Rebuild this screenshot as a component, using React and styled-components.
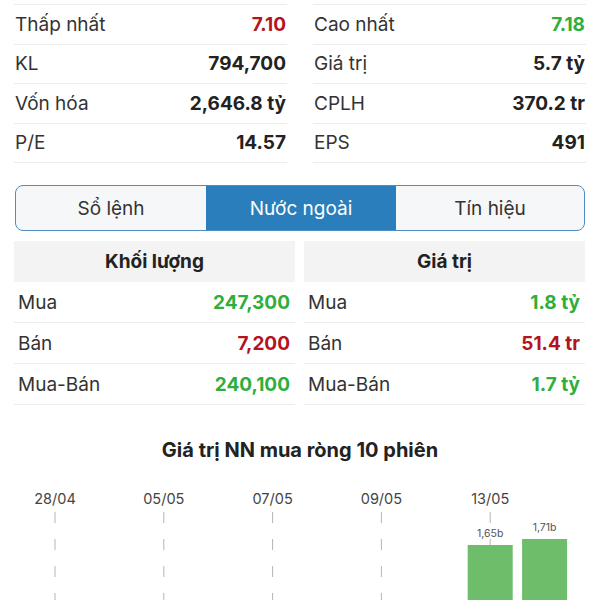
import React, { useState } from 'react';
import styled, { createGlobalStyle } from 'styled-components';

const GlobalStyle = createGlobalStyle`
  html, body {
    margin: 0;
    padding: 0;
    background: #fff;
    overflow: hidden;
  }
  body {
    font-family: Inter, "Noto Sans", sans-serif;
    color: #2b2b2b;
  }
`;

const GREEN = '#2eae3c';
const RED = '#b3141d';

const stats = [
  [
    { label: 'Thấp nhất', value: '7.10', color: RED },
    { label: 'KL', value: '794,700' },
    { label: 'Vốn hóa', value: '2,646.8 tỷ' },
    { label: 'P/E', value: '14.57' },
  ],
  [
    { label: 'Cao nhất', value: '7.18', color: GREEN },
    { label: 'Giá trị', value: '5.7 tỷ' },
    { label: 'CPLH', value: '370.2 tr' },
    { label: 'EPS', value: '491' },
  ],
];

const foreign = [
  {
    title: 'Khối lượng',
    rows: [
      { label: 'Mua', value: '247,300', color: GREEN },
      { label: 'Bán', value: '7,200', color: RED },
      { label: 'Mua-Bán', value: '240,100', color: GREEN },
    ],
  },
  {
    title: 'Giá trị',
    rows: [
      { label: 'Mua', value: '1.8 tỷ', color: GREEN },
      { label: 'Bán', value: '51.4 tr', color: RED },
      { label: 'Mua-Bán', value: '1.7 tỷ', color: GREEN },
    ],
  },
];

const tabs = ['Sổ lệnh', 'Nước ngoài', 'Tín hiệu'];

const Page = styled.div`
  padding: 4px 14px 0;
`;

const StatsGrid = styled.div`
  display: grid;
  grid-template-columns: 1fr 1fr;
  column-gap: 26px;
`;

const StatCol = styled.div`
  border-top: 1px solid #ededed;
`;

const StatRow = styled.div`
  display: flex;
  justify-content: space-between;
  align-items: center;
  height: 38.5px;
  border-bottom: 1px solid #ededed;
  padding: 0 1px;
  font-size: 19px;
`;

const Label = styled.span`
  color: #333;
`;

const Value = styled.span`
  font-weight: 700;
  color: ${(p) => p.$color || '#222'};
`;

const Tabs = styled.div`
  display: grid;
  grid-template-columns: 190px 190px 1fr;
  margin: 22px 1px 0;
  height: 44px;
  border: 1.5px solid #4f8cc2;
  border-radius: 8px;
  overflow: hidden;
  background: #f6f7f9;
`;

const Tab = styled.div`
  display: flex;
  align-items: center;
  justify-content: center;
  font-size: 19px;
  color: ${(p) => (p.$active ? '#fff' : '#333')};
  background: ${(p) => (p.$active ? '#2a7ebc' : 'transparent')};
`;

const ForeignGrid = styled.div`
  display: grid;
  grid-template-columns: 281px 281px;
  column-gap: 9px;
  margin-top: 10px;
`;

const Header = styled.div`
  height: 41px;
  display: flex;
  align-items: center;
  justify-content: center;
  background: #f3f3f3;
  font-size: 19px;
  font-weight: 700;
  color: #222;
`;

const ForeignRow = styled.div`
  display: flex;
  justify-content: space-between;
  align-items: center;
  height: 39px;
  padding: 1px 5px 0 4px;
  border-bottom: 1px solid #ededed;
  font-size: 19px;
`;

const ChartTitle = styled.div`
  margin-top: 33px;
  text-align: center;
  font-size: 20px;
  font-weight: 700;
  color: #222;
`;

const ChartWrap = styled.div`
  margin: 20px -14px 0;
  height: 130px;
`;

const dates = ['28/04', '05/05', '07/05', '09/05', '13/05'];
const bars = [
  { i: 8, top: 63, label: '1,65b' },
  { i: 9, top: 57, label: '1,71b' },
];

function Chart() {
  const cx = (i) => 55 + 54.4 * i;
  return (
    <svg width="600" height="130" viewBox="0 0 600 130">
      {dates.map((d, k) => (
        <g key={d}>
          <text
            x={cx(k * 2)}
            y={22}
            textAnchor="middle"
            fontSize="14.5"
            fill="#444"
            fontFamily="Inter, sans-serif"
          >
            {d}
          </text>
          <line
            x1={cx(k * 2)}
            x2={cx(k * 2)}
            y1={30}
            y2={130}
            stroke="#b4b4b4"
            strokeWidth="1"
            strokeDasharray="11 16"
          />
        </g>
      ))}
      {bars.map((b) => (
        <g key={b.i}>
          <rect x={cx(b.i) - 22.5} y={b.top} width="45" height={130 - b.top} fill="#6dbd6a" />
          <text
            x={cx(b.i)}
            y={b.top - 8}
            textAnchor="middle"
            fontSize="10.5"
            fill="#555"
            fontFamily="Inter, sans-serif"
          >
            {b.label}
          </text>
        </g>
      ))}
    </svg>
  );
}

export default function App() {
  const [active, setActive] = useState(1);
  return (
    <>
      <GlobalStyle />
      <Page>
        <StatsGrid>
          {stats.map((col, c) => (
            <StatCol key={c}>
              {col.map((s) => (
                <StatRow key={s.label}>
                  <Label>{s.label}</Label>
                  <Value $color={s.color}>{s.value}</Value>
                </StatRow>
              ))}
            </StatCol>
          ))}
        </StatsGrid>

        <Tabs>
          {tabs.map((t, i) => (
            <Tab key={t} $active={i === active} onClick={() => setActive(i)}>
              {t}
            </Tab>
          ))}
        </Tabs>

        <ForeignGrid>
          {foreign.map((f) => (
            <div key={f.title}>
              <Header>{f.title}</Header>
              {f.rows.map((r) => (
                <ForeignRow key={r.label}>
                  <Label>{r.label}</Label>
                  <Value $color={r.color}>{r.value}</Value>
                </ForeignRow>
              ))}
            </div>
          ))}
        </ForeignGrid>

        <ChartTitle>Giá trị NN mua ròng 10 phiên</ChartTitle>
        <ChartWrap>
          <Chart />
        </ChartWrap>
      </Page>
    </>
  );
}
